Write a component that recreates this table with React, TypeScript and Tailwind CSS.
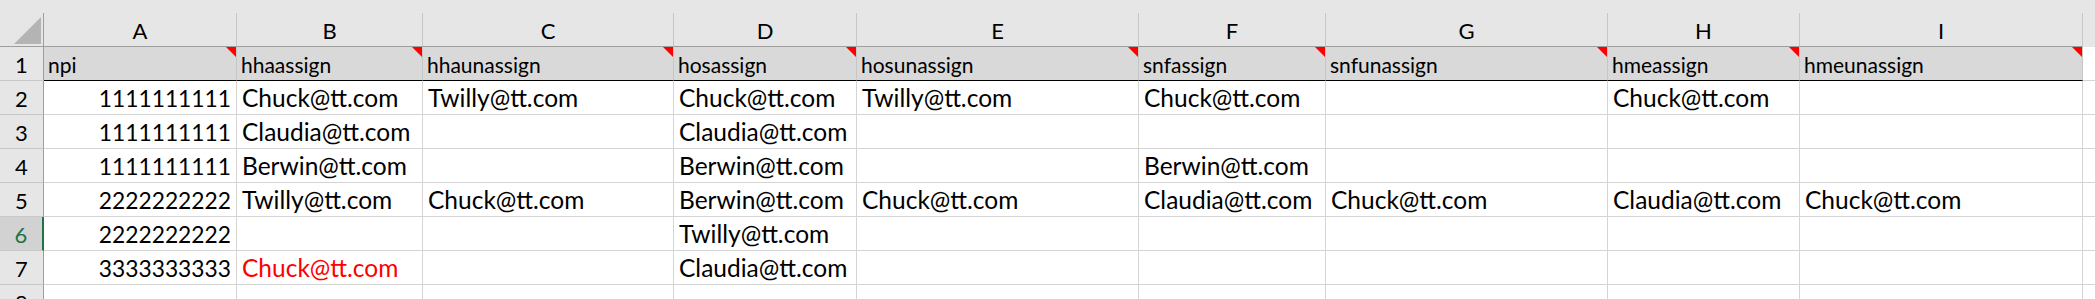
import React from 'react';

type CellValue = string | { text: string; red: boolean };

const columnLetters = ['A', 'B', 'C', 'D', 'E', 'F', 'G', 'H', 'I'];

const headers = [
  'npi', 'hhaassign', 'hhaunassign', 'hosassign', 'hosunassign',
  'snfassign', 'snfunassign', 'hmeassign', 'hmeunassign'
];

const rows: { num: string; cells: CellValue[] }[] = [
  { num: '2', cells: ['1111111111', 'Chuck@tt.com', 'Twilly@tt.com', 'Chuck@tt.com', 'Twilly@tt.com', 'Chuck@tt.com', '', 'Chuck@tt.com', ''] },
  { num: '3', cells: ['1111111111', 'Claudia@tt.com', '', 'Claudia@tt.com', '', '', '', '', ''] },
  { num: '4', cells: ['1111111111', 'Berwin@tt.com', '', 'Berwin@tt.com', '', 'Berwin@tt.com', '', '', ''] },
  { num: '5', cells: ['2222222222', 'Twilly@tt.com', 'Chuck@tt.com', 'Berwin@tt.com', 'Chuck@tt.com', 'Claudia@tt.com', 'Chuck@tt.com', 'Claudia@tt.com', 'Chuck@tt.com'] },
  { num: '6', cells: ['2222222222', '', '', 'Twilly@tt.com', '', '', '', '', ''] },
  { num: '7', cells: ['3333333333', { text: 'Chuck@tt.com', red: true }, '', 'Claudia@tt.com', '', '', '', '', ''] },
  { num: '8', cells: ['', '', '', '', '', '', '', '', ''] },
];

const CommentMark = () => (
  <svg className="absolute top-0 right-0" width="10" height="10" viewBox="0 0 10 10">
    <polygon points="0,0 10,0 10,10" fill="#ff0000" />
  </svg>
);

const App: React.FC = () => {
  return (
    <div className="w-[2095px] h-[299px] overflow-hidden bg-white font-[Lato,sans-serif] text-black">
      {/* strip above the column headers */}
      <div className="h-[13px] bg-[#e6e6e6]" />

      <div className="grid grid-cols-[44px_193px_186px_251px_183px_282px_187px_282px_192px_283px_1fr]">
        {/* Column headers */}
        <div className="relative h-[34px] bg-[#e6e6e6] border-r border-b border-[#9e9e9e]">
          <svg className="absolute left-[14px] top-[4px]" width="27" height="27" viewBox="0 0 27 27">
            <polygon points="0,27 27,27 27,0" fill="#b4b4b4" />
          </svg>
        </div>
        {columnLetters.map(letter => (
          <div
            key={letter}
            className="h-[34px] bg-[#e6e6e6] border-r border-r-[#c6c6c6] border-b border-b-[#9e9e9e] flex items-end justify-center pb-[4px] text-[22px] leading-none"
          >
            {letter}
          </div>
        ))}
        <div className="h-[34px] bg-[#e6e6e6]" />

        {/* Row 1 - header row */}
        <div className="h-[34px] bg-[#e6e6e6] border-r border-r-[#9e9e9e] border-b border-b-[#c8c8c8] flex items-end justify-center pb-[4px] text-[22px] leading-none">
          1
        </div>
        {headers.map(h => (
          <div
            key={h}
            className="relative h-[34px] bg-[#d9d9d9] border-r border-r-[#c6c6c6] border-b border-b-black flex items-end pl-[4px] pb-[5px] text-[21px] leading-none"
          >
            {h}
            <CommentMark />
          </div>
        ))}
        <div className="h-[34px] border-b border-[#d4d4d4]" />

        {/* Data rows */}
        {rows.map(row => {
          const selected = row.num === '6';
          return (
            <React.Fragment key={row.num}>
              <div
                className={`h-[34px] flex items-end justify-center pb-[4px] text-[22px] leading-none border-b border-b-[#c8c8c8] ${
                  selected
                    ? 'bg-[#d2d2d2] text-[#217346] border-r-2 border-r-[#217346]'
                    : 'bg-[#e6e6e6] border-r border-r-[#9e9e9e]'
                }`}
              >
                {row.num}
              </div>
              {row.cells.map((cell, i) => {
                const text = typeof cell === 'string' ? cell : cell.text;
                const red = typeof cell !== 'string' && cell.red;
                return (
                  <div
                    key={i}
                    className={`h-[34px] border-r border-b border-[#d4d4d4] flex items-end leading-none whitespace-nowrap ${
                      i === 0 ? 'justify-end pr-[5px] pb-[4px] text-[22.8px]' : 'pl-[5px] pb-[4px] text-[24.5px]'
                    } ${red ? 'text-[#ff0000]' : ''}`}
                  >
                    {text}
                  </div>
                );
              })}
              <div className="h-[34px] border-b border-[#d4d4d4]" />
            </React.Fragment>
          );
        })}
      </div>
    </div>
  );
};

export default App;
